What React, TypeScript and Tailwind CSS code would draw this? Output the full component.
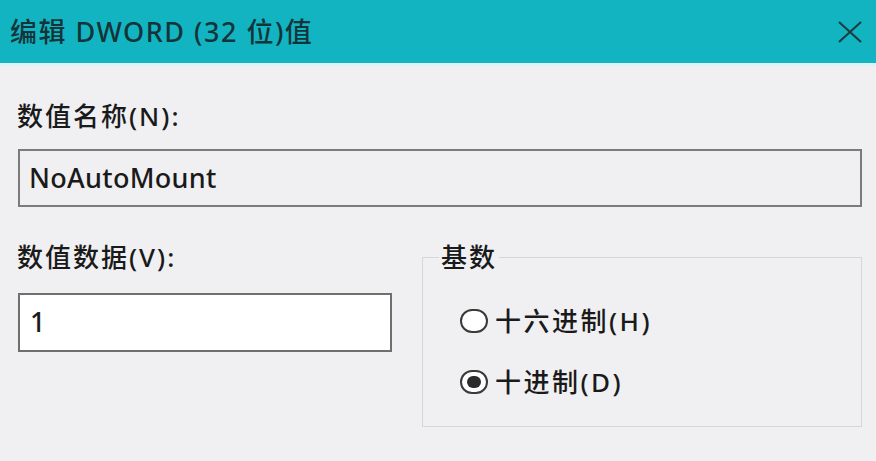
import React from "react";

const font = { fontFamily: '"Noto Sans", "Noto Sans CJK SC", sans-serif' };

function Radio({ label, checked }: { label: string; checked?: boolean }) {
  return (
    <div className="flex items-center h-[34px]">
      <span className="w-[28px] h-[24px] rounded-full border-2 border-[#3a3a3a] bg-white flex items-center justify-center">
        {checked && <span className="w-[14px] h-[12px] rounded-full bg-[#2b2b2b]" />}
      </span>
      <span className="ml-[7px] text-[26px] tracking-[2.5px] text-[#1a1a1a] leading-[34px]">{label}</span>
    </div>
  );
}

export default function App() {
  return (
    <div className="w-[876px] h-[461px] bg-[#f0f0f2] overflow-hidden font-medium" style={font}>
      {/* Title bar */}
      <div className="h-[63px] bg-[#12b4c1] flex items-center justify-between pl-[10px] pr-[14px]">
        <span className="text-[27px] tracking-[1.5px] text-[#14343a] leading-[34px]">编辑 DWORD (32 位)值</span>
        <svg width="24" height="22" viewBox="0 0 24 22" className="text-[#1d3d40]">
          <path d="M1 1 L23 21 M23 1 L1 21" stroke="currentColor" strokeWidth="2.2" fill="none" />
        </svg>
      </div>
      <div className="h-[3px] bg-[#d8f4f6]" />

      <div className="pl-[18px] pr-[14px] pt-[33px] text-[#1a1a1a]">
        <div className="text-[26px] tracking-[2px] leading-[34px] -ml-[1px]">数值名称(N):</div>
        <div className="mt-[16px] h-[58px] border-2 border-[#7b7b7b] bg-[#f0f0f2] flex items-center pl-[9px] text-[27px] tracking-[0.3px]">
          NoAutoMount
        </div>

        <div className="mt-[33px] flex justify-between">
          <div className="w-[374px]">
            <div className="text-[26px] tracking-[2px] leading-[34px] -ml-[1px]">数值数据(V):</div>
            <div className="mt-[19px] h-[59px] border-2 border-[#6f6f6f] bg-white flex items-center pl-[10px] text-[27px]">
              1
            </div>
          </div>

          <fieldset className="w-[440px] h-[187px] border border-[#d6d6d8] px-[16px] pb-[20px]">
            <legend className="px-[2px] text-[26px] tracking-[2px] leading-[34px]">基数</legend>
            <div className="pl-[21px] mt-[30px] flex flex-col gap-[27px]">
              <Radio label="十六进制(H)" />
              <Radio label="十进制(D)" checked />
            </div>
          </fieldset>
        </div>
      </div>
    </div>
  );
}
